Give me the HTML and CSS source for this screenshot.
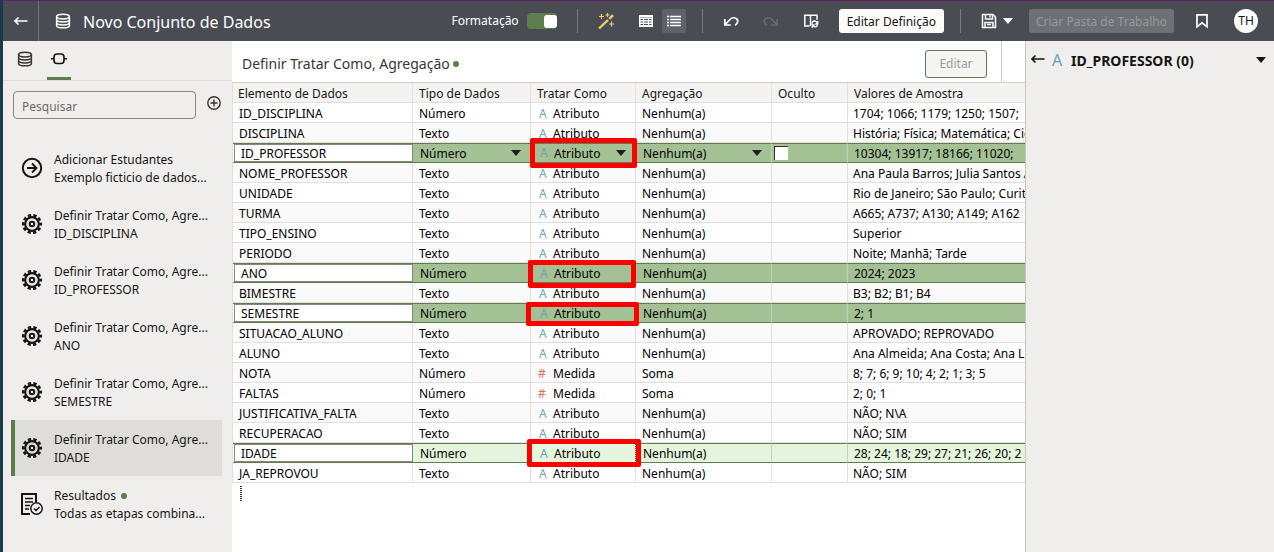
FILE: index.html
```html
<!DOCTYPE html>
<html lang="pt-BR">
<head>
<meta charset="utf-8">
<title>Novo Conjunto de Dados</title>
<link rel="stylesheet" href="styles.css">
</head>
<body>
<svg class="defs" aria-hidden="true">
  <symbol id="db" viewBox="0 0 16 16"><g fill="none" stroke="currentColor" stroke-width="1.5"><ellipse cx="8" cy="3.6" rx="6.4" ry="2.4"/><path d="M1.600 3.600v8.800c0 3.200 12.800 3.200 12.800 0V3.600M1.600 6.600c0 3.100 12.800 3.100 12.800 0M1.600 9.600c0 3.100 12.800 3.100 12.800 0"/></g></symbol>
  <symbol id="back" viewBox="0 0 16 16"><path d="M14.500 8H2M5.500 4.500L2 8l3.500 3.500" fill="none" stroke="currentColor" stroke-width="1.700"/></symbol>
  <symbol id="gear" viewBox="0 0 24 24"><g fill="none" stroke="currentColor"><circle cx="12" cy="12" r="7.500" stroke-width="2.300"/><circle cx="12" cy="12" r="2.500" stroke-width="2.200"/><circle cx="12" cy="12" r="9.500" stroke-width="3" stroke-dasharray="3.530 2.439" stroke-dashoffset="1.765"/></g></symbol>
</svg>

<header class="topbar">
  <button class="back" type="button" aria-label="Voltar"><svg class="i16"><use href="#back"/></svg></button>
  <svg class="i16 title-icon"><use href="#db"/></svg>
  <h1 class="title">Novo Conjunto de Dados</h1>
  <div class="tools">
    <label class="switch">Formatação<input type="checkbox" checked></label>
    <span class="rule"></span>
    <button class="icon-btn" type="button" aria-label="Recomendações"><svg class="i18" viewBox="0 0 18 18"><path d="M2 16.500L11 8M12.300 6.800L16 3.200" stroke="#f0cc71" stroke-width="2.400"/><path d="M4.500 2v5M2 4.500h5M10.500 1v4M8.500 3h4M14.500 9.500v5M12 12h5" stroke="#f0cc71" stroke-width="1.200"/></svg></button>
    <button class="icon-btn" type="button" aria-label="Tabela"><svg class="i16" viewBox="0 0 16 16"><path d="M1 2h14v12H1z" fill="#fff"/><path d="M2 4.500h12" stroke="#b5b6ba"/><path d="M2.500 6.500h2.500M6 6.500h4M11 6.500h2.500M2.500 9h2.500M6 9h4M11 9h2.500M2.500 11.500h2.500M6 11.500h4M11 11.500h2.500" stroke="#4a4c53" stroke-width="1.200"/></svg></button>
    <button class="icon-btn on" type="button" aria-label="Lista"><svg class="i16" viewBox="0 0 16 16"><path d="M1 3.500h2M1 6.500h2M1 9.500h2M1 12.500h2M4 3.500h11M4 6.500h11M4 9.500h11M4 12.500h11" stroke="#fff" stroke-width="1.700"/></svg></button>
    <span class="rule"></span>
    <button class="icon-btn" type="button" aria-label="Desfazer"><svg class="i16" viewBox="0 0 16 16"><path d="M1.800 6v6h6M2.300 11.500L7 6.500c3-3.200 8-1.500 7.700 2-.1 1.900-1.300 2.900-2.700 3.700" fill="none" stroke="#fff" stroke-width="1.700"/></svg></button>
    <button class="icon-btn" type="button" aria-label="Refazer" disabled><svg class="i16" viewBox="0 0 16 16"><path d="M14.200 6v6h-6M13.700 11.500L9 6.500c-3-3.200-8-1.500-7.700 2 .1 1.900 1.300 2.900 2.700 3.700" fill="none" stroke="#686a71" stroke-width="1.700"/></svg></button>
    <button class="icon-btn" type="button" aria-label="Recarregar"><svg class="i16" viewBox="0 0 16 16"><path d="M6.500 13H1.800V2.200H14v4.500M7.500 2.200V13" fill="none" stroke="#fff" stroke-width="1.500"/><path d="M9 11.500c-.5-4.500 5-4.500 5-1M14.500 12c-.8 2.500-4 2.500-5 .5M9.300 15v-3h2.500M14.800 8v3h-2.600" fill="none" stroke="#fff" stroke-width="1.300"/></svg></button>
    <button class="btn light" type="button">Editar Definição</button>
    <span class="rule"></span>
    <button class="save" type="button" aria-label="Salvar"><svg class="i16" viewBox="0 0 16 16"><path d="M1.500 1.500h10.500l2.500 2.500v10.500h-13zM4.500 2v4h7V2M4 14V9.500h8V14M6 11.500h4M9 2.500v2" fill="none" stroke="#fff" stroke-width="1.500"/></svg><span class="caret"></span></button>
    <button class="btn dim" type="button" disabled>Criar Pasta de Trabalho</button>
    <button class="icon-btn" type="button" aria-label="Marcador"><svg class="i16" viewBox="0 0 16 16"><path d="M3 1.800h10v12L8 9.800l-5 4z" fill="none" stroke="#fff" stroke-width="1.700"/></svg></button>
    <button class="avatar" type="button">TH</button>
  </div>
</header>

<div class="body">
  <aside class="side">
    <nav class="tabs">
      <button class="tab" type="button" aria-label="Dados"><svg class="i16"><use href="#db"/></svg></button>
      <button class="tab active" type="button" aria-label="Etapas"><svg class="i16" viewBox="0 0 16 16"><rect x="3" y="3" width="10" height="9.500" rx="3" fill="none" stroke="currentColor" stroke-width="1.600"/><path d="M0 7.800h3M13 7.800h3" stroke="currentColor" stroke-width="1.600"/></svg></button>
    </nav>
    <div class="search">
      <input type="text" placeholder="Pesquisar" aria-label="Pesquisar">
      <button class="plus" type="button" aria-label="Adicionar"><svg class="i16" viewBox="0 0 16 16"><circle cx="8" cy="8" r="6.200" fill="none" stroke="currentColor" stroke-width="1.400"/><path d="M8 4.500v7M4.500 8h7" stroke="currentColor" stroke-width="1.400"/></svg></button>
    </div>
    <ul class="steps">
      <li class="step"><svg class="i22" viewBox="0 0 22 22"><circle cx="11" cy="11" r="9.200" fill="none" stroke="currentColor" stroke-width="2"/><path d="M6 11h9.500M11 6.500l4.500 4.500-4.500 4.500" fill="none" stroke="currentColor" stroke-width="1.900"/></svg><div class="step-text"><span>Adicionar Estudantes</span><span>Exemplo ficticio de dados...</span></div></li>
      <li class="step"><svg class="i22"><use href="#gear"/></svg><div class="step-text"><span>Definir Tratar Como, Agre...</span><span>ID_DISCIPLINA</span></div></li>
      <li class="step"><svg class="i22"><use href="#gear"/></svg><div class="step-text"><span>Definir Tratar Como, Agre...</span><span>ID_PROFESSOR</span></div></li>
      <li class="step"><svg class="i22"><use href="#gear"/></svg><div class="step-text"><span>Definir Tratar Como, Agre...</span><span>ANO</span></div></li>
      <li class="step"><svg class="i22"><use href="#gear"/></svg><div class="step-text"><span>Definir Tratar Como, Agre...</span><span>SEMESTRE</span></div></li>
      <li class="step current"><svg class="i22"><use href="#gear"/></svg><div class="step-text"><span>Definir Tratar Como, Agre...</span><span>IDADE</span></div></li>
      <li class="step"><svg class="i22" viewBox="0 0 22 22"><path d="M9 21H1V1h14v8" fill="none" stroke="currentColor" stroke-width="2"/><path d="M4 5.500h8M4 9h8M4 12.500h5M4 16h4" stroke="currentColor" stroke-width="1.600"/><circle cx="15.500" cy="15.500" r="5.700" fill="none" stroke="currentColor" stroke-width="1.500"/><path d="M13 15.500l2 2 3.500-3.500" fill="none" stroke="currentColor" stroke-width="1.500"/></svg><div class="step-text"><span>Resultados <i class="dot"></i></span><span>Todas as etapas combina...</span></div></li>
    </ul>
  </aside>

  <main class="main">
    <div class="main-head">
      <h2>Definir Tratar Como, Agregação <i class="dot"></i></h2>
      <button class="edit" type="button" disabled>Editar</button>
      <span class="head-end"></span>
    </div>
    <table class="grid">
      <colgroup><col class="c-name"><col class="c-type"><col class="c-treat"><col class="c-agg"><col class="c-hide"><col></colgroup>
      <thead>
        <tr><th>Elemento de Dados</th><th>Tipo de Dados</th><th>Tratar Como</th><th>Agregação</th><th>Oculto</th><th>Valores de Amostra</th></tr>
      </thead>
      <tbody>
        <tr><td>ID_DISCIPLINA</td><td>Número</td><td><b class="attr">A</b>Atributo</td><td>Nenhum(a)</td><td></td><td>1704; 1066; 1179; 1250; 1507;</td></tr>
        <tr><td>DISCIPLINA</td><td>Texto</td><td><b class="attr">A</b>Atributo</td><td>Nenhum(a)</td><td></td><td>História; Física; Matemática; Cie</td></tr>
        <tr class="changed">
          <td class="name"><input type="text" value="ID_PROFESSOR" aria-label="Nome do elemento"></td>
          <td><label class="pick"><select aria-label="Tipo de Dados"><option>Número</option></select><span class="caret"></span></label></td>
          <td class="marked"><label class="pick"><b class="attr">A</b><select aria-label="Tratar Como"><option>Atributo</option></select><span class="caret"></span></label><span class="mark mark-a"></span></td>
          <td><label class="pick"><select aria-label="Agregação"><option>Nenhum(a)</option></select><span class="caret"></span></label></td>
          <td class="check"><input type="checkbox" aria-label="Oculto"></td>
          <td>10304; 13917; 18166; 11020;</td>
        </tr>
        <tr><td>NOME_PROFESSOR</td><td>Texto</td><td><b class="attr">A</b>Atributo</td><td>Nenhum(a)</td><td></td><td>Ana Paula Barros; Julia Santos A</td></tr>
        <tr><td>UNIDADE</td><td>Texto</td><td><b class="attr">A</b>Atributo</td><td>Nenhum(a)</td><td></td><td>Rio de Janeiro; São Paulo; Curit</td></tr>
        <tr><td>TURMA</td><td>Texto</td><td><b class="attr">A</b>Atributo</td><td>Nenhum(a)</td><td></td><td>A665; A737; A130; A149; A162</td></tr>
        <tr><td>TIPO_ENSINO</td><td>Texto</td><td><b class="attr">A</b>Atributo</td><td>Nenhum(a)</td><td></td><td>Superior</td></tr>
        <tr><td>PERIODO</td><td>Texto</td><td><b class="attr">A</b>Atributo</td><td>Nenhum(a)</td><td></td><td>Noite; Manhã; Tarde</td></tr>
        <tr class="changed"><td class="name"><input type="text" value="ANO" aria-label="Nome do elemento"></td><td>Número</td><td class="marked"><b class="attr">A</b>Atributo<span class="mark mark-b"></span></td><td>Nenhum(a)</td><td></td><td>2024; 2023</td></tr>
        <tr><td>BIMESTRE</td><td>Texto</td><td><b class="attr">A</b>Atributo</td><td>Nenhum(a)</td><td></td><td>B3; B2; B1; B4</td></tr>
        <tr class="changed"><td class="name"><input type="text" value="SEMESTRE" aria-label="Nome do elemento"></td><td>Número</td><td class="marked"><b class="attr">A</b>Atributo<span class="mark mark-c"></span></td><td>Nenhum(a)</td><td></td><td>2; 1</td></tr>
        <tr><td>SITUACAO_ALUNO</td><td>Texto</td><td><b class="attr">A</b>Atributo</td><td>Nenhum(a)</td><td></td><td>APROVADO; REPROVADO</td></tr>
        <tr><td>ALUNO</td><td>Texto</td><td><b class="attr">A</b>Atributo</td><td>Nenhum(a)</td><td></td><td>Ana Almeida; Ana Costa; Ana L</td></tr>
        <tr><td>NOTA</td><td>Número</td><td><b class="meas">#</b>Medida</td><td>Soma</td><td></td><td>8; 7; 6; 9; 10; 4; 2; 1; 3; 5</td></tr>
        <tr><td>FALTAS</td><td>Número</td><td><b class="meas">#</b>Medida</td><td>Soma</td><td></td><td>2; 0; 1</td></tr>
        <tr><td>JUSTIFICATIVA_FALTA</td><td>Texto</td><td><b class="attr">A</b>Atributo</td><td>Nenhum(a)</td><td></td><td>NÃO; N\A</td></tr>
        <tr><td>RECUPERACAO</td><td>Texto</td><td><b class="attr">A</b>Atributo</td><td>Nenhum(a)</td><td></td><td>NÃO; SIM</td></tr>
        <tr class="changed latest"><td class="name"><input type="text" value="IDADE" aria-label="Nome do elemento"></td><td>Número</td><td class="marked focus"><b class="attr">A</b>Atributo<span class="mark mark-d"></span></td><td>Nenhum(a)</td><td></td><td>28; 24; 18; 29; 27; 21; 26; 20; 2</td></tr>
        <tr><td>JA_REPROVOU</td><td>Texto</td><td><b class="attr">A</b>Atributo</td><td>Nenhum(a)</td><td></td><td>NÃO; SIM</td></tr>
      </tbody>
    </table>
    <div class="grip"></div>
  </main>

  <aside class="detail">
    <button class="plain" type="button" aria-label="Voltar"><svg class="i16"><use href="#back"/></svg></button>
    <b class="attr big">A</b>
    <h2>ID_PROFESSOR (0)</h2>
    <button class="plain menu" type="button" aria-label="Opções"><span class="caret"></span></button>
  </aside>
</div>
</body>
</html>
```
FILE: styles.css
```css
* { box-sizing: border-box; }
html { height: 100%; }
body {
  display: flex;
  flex-direction: column;
  margin: 0;
  min-height: 100%;
  border-top: 1px solid #671f66;
  border-left: 3px solid #183c49;
  background: #efeeec;
  color: #161513;
  font: 12px/18px "Noto Sans", "Open Sans", sans-serif;
}
button, input, select { font: inherit; color: inherit; margin: 0; }
button { border: 0; padding: 0; background: none; display: flex; align-items: center; justify-content: center; }
h1, h2 { margin: 0; }
svg { flex: none; display: block; }
.defs { position: absolute; width: 0; height: 0; }
.i16 { width: 16px; height: 16px; }
.i18 { width: 18px; height: 18px; }
.i22 { width: 22px; height: 22px; }
.dot { display: inline-block; width: 6px; height: 6px; border-radius: 50%; background: #5f7d4f; vertical-align: 1px; }
.caret { flex: none; width: 10px; height: 6px; background: currentColor; clip-path: polygon(0 0, 100% 0, 50% 100%); }

.topbar { display: flex; align-items: center; height: 40px; background: #4a4c53; color: #fff; }
.back { width: 36px; height: 40px; border-right: 1px solid #72747a; }
.title-icon { margin: 0 12px 0 16px; }
.title { padding-top: 2px; font-size: 16px; line-height: 24px; font-weight: 400; white-space: nowrap; }
.tools { display: flex; align-items: center; gap: 16px; margin-left: auto; padding-right: 16px; }
.rule { width: 1px; height: 24px; background: #777980; }
.switch { display: flex; align-items: center; gap: 8px; margin-right: 4px; }
.switch input { appearance: none; width: 30px; height: 16px; border-radius: 4px; background: #5f7d4f; display: flex; justify-content: flex-end; align-items: center; }
.switch input::before { content: ""; width: 13px; height: 13px; border-radius: 3px; background: #fff; }
.icon-btn { width: 24px; height: 24px; border-radius: 2px; }
.icon-btn.on { background: #606269; margin-left: -12px; }
.btn { height: 24px; border-radius: 3px; padding: 2px 8px 0; white-space: nowrap; }
.btn.light { background: #fcfbfa; color: #161513; }
.btn.dim { padding: 2px 7px 0; background: #6e7075; color: #98999d; }
.save { gap: 6px; padding-left: 4px; }
.avatar { width: 24px; height: 24px; margin-left: 4px; border-radius: 50%; background: #fff; color: #161513; }

.body { display: flex; flex: 1; }
.side { flex: none; width: 229px; }
.tabs { display: flex; gap: 10px; height: 40px; padding-left: 10px; border-bottom: 1px solid #dedcda; }
.tab { width: 24px; color: #3a3632; border-bottom: 3px solid transparent; }
.tab.active { color: #161513; border-bottom-color: #5f7d4f; }
.search { display: flex; gap: 10px; align-items: center; padding: 10px; }
.search input { width: 183px; height: 28px; padding: 2px 8px 0; border: 1px solid #8b8580; border-radius: 4px; background: transparent; }
.search input::placeholder { color: #6f6a66; opacity: 1; }
.plus { margin-bottom: 4px; color: #3a3632; }
.steps { list-style: none; margin: 0; padding: 11px 10px 0 8px; }
.step { display: flex; align-items: center; gap: 11px; height: 56px; border-left: 4px solid transparent; padding-left: 6px; }
.step.current { background: #dfddd9; border-left-color: #5f7d4f; }
.step-text { display: flex; flex-direction: column; padding-top: 2px; white-space: nowrap; }
.step .dot { margin-left: 2px; }

.main { flex: 1; min-width: 0; overflow: hidden; background: #fff; }
.main-head { display: flex; align-items: center; height: 41px; padding-left: 10px; }
.main-head h2 { flex: 1; padding-top: 4px; font-size: 14px; line-height: 20px; font-weight: 400; color: #3a3632; }
.main-head .dot { vertical-align: 2px; }
.edit { width: 62px; height: 28px; margin-top: 4px; border: 1px solid #5f7d4f; border-radius: 3px; background: #f5f4f2; color: #a09c98; }
.head-end { align-self: stretch; width: 24px; margin-left: 14px; border-left: 1px solid #d0cdca; }

.grid { width: 100%; table-layout: fixed; border-collapse: separate; border-spacing: 0; border-top: 1px solid #d0cdc6; border-left: 1px solid #e0e0e0; }
.c-name { width: 180px; }
.c-type { width: 118px; }
.c-treat { width: 105px; }
.c-agg { width: 136px; }
.c-hide { width: 76px; }
.grid th, .grid td { height: 20px; padding: 2px 6px 0; border-right: 1px solid #dfe0df; border-bottom: 1px solid #dfe0df; line-height: 17px; text-align: left; white-space: nowrap; overflow: hidden; }
.grid th { background: #f4f3f2; font-weight: 400; }
.grid th:first-child { padding-left: 5px; }
.grid th:last-child, .grid td:last-child { border-right: 0; padding-right: 0; }
.grid td:last-child { padding-left: 5px; }
.grid tbody tr { color: #000; }
.grid tbody tr:nth-child(even) { background: #fafafa; }
.grid tbody tr.changed { background: #a4c095; }
.grid tbody tr.latest { background: #e5f4dd; }
.grid .changed td { padding-top: 0; padding-left: 7px; border-top: 1px solid #5f7d4f; border-bottom-color: #5f7d4f; border-right-color: #c3d3ba; }
.grid .changed td:last-child { padding-left: 6px; }
.grid .changed td.name { padding: 0 0 0 1px; border-right: 0; background: #fff; }
.name input { display: block; width: 100%; height: 18px; padding: 0 6px; border: 1px solid #8b8580; background: #fff; line-height: 16px; }
.attr, .meas { display: inline-block; width: 16px; padding-left: 2px; font: 12px/16px "Noto Sans", sans-serif; color: #6ba3b8; }
.meas { padding-left: 1px; color: #d9705c; }
.pick { display: flex; align-items: center; padding-right: 3px; }
.pick select { flex: 1; min-width: 0; appearance: none; border: 0; padding: 0; background: none; line-height: 17px; height: 17px; }
.pick .caret { background: #201e1c; }
.grid .changed .check { padding-left: 2px; }
.check input { display: block; appearance: none; width: 14px; height: 14px; background: #fff; border: solid #333; border-width: 1px 0 0 1px; }
.grid td.marked { position: relative; overflow: visible; }
.focus { outline: 1px dotted #555; outline-offset: -1px; }
.mark { position: absolute; z-index: 1; border: 5px solid #fe0000; border-radius: 2px; pointer-events: none; }
.mark-a { inset: -6px -2px -6px -1px; }
.mark-b { inset: -4px -1px -6px -3px; }
.mark-c { inset: -2px -4px -4px -5px; }
.mark-d { inset: -5px -6px -5px -4px; }
.grip { width: 2px; height: 15px; margin: 3px 0 0 8px; background: repeating-linear-gradient(#333 0 1px, transparent 1px 2px); }

.detail { display: flex; align-items: flex-start; flex: none; width: 249px; padding: 10px 8px 0 4px; border-left: 1px solid #c9c6c2; }
.detail h2 { flex: 1; font-size: 14px; line-height: 20px; font-weight: 700; }
.attr.big { width: 20px; padding-left: 1px; font-size: 16px; line-height: 18px; margin-left: 5px; }
.menu { height: 18px; }
```
